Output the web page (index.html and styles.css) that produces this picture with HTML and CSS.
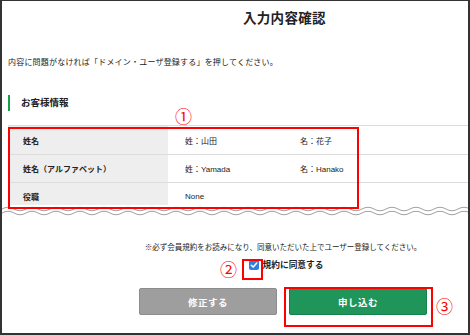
FILE: index.html
```html
<!DOCTYPE html>
<html lang="ja">
<head>
    <meta charset="UTF-8">
    <title>入力内容確認</title>
    <link rel="stylesheet" href="styles.css">
</head>
<body>
    <div class="frame">
        <h1 class="title">入力内容確認</h1>

        <p class="intro">内容に問題がなければ「ドメイン・ユーザ登録する」を押してください。</p>

        <h2 class="section">お客様情報</h2>

        <div class="table-wrap">
            <div class="row">
                <div class="label">姓名</div>
                <div class="value">姓：山田</div>
                <div class="value">名：花子</div>
            </div>
            <div class="row">
                <div class="label">姓名（アルファベット）</div>
                <div class="value">姓：Yamada</div>
                <div class="value">名：Hanako</div>
            </div>
            <div class="row">
                <div class="label">役職</div>
                <div class="value">None</div>
                <div class="value"></div>
            </div>
        </div>

        <svg class="wave" width="466" height="12" viewBox="0 0 466 12">
            <defs>
                <pattern id="wv" width="24" height="12" patternUnits="userSpaceOnUse">
                    <path d="M0 4 Q6 0.5 12 4 T24 4" stroke="#a0a0a0" stroke-width="1" fill="none"/>
                    <path d="M0 8 Q6 4.5 12 8 T24 8" stroke="#a0a0a0" stroke-width="1" fill="none"/>
                </pattern>
            </defs>
            <rect width="466" height="12" fill="#fff"/>
            <rect width="466" height="12" fill="url(#wv)"/>
        </svg>

        <div class="footer">
            <p class="note">※必ず会員規約をお読みになり、同意いただいた上でユーザー登録してください。</p>
            <div class="agree">
                <span class="check">
                    <svg width="10" height="10" viewBox="0 0 10 10"><path d="M2.3 5.2 L4.2 7 L7.8 3" stroke="#fff" stroke-width="1.5" fill="none" stroke-linecap="round" stroke-linejoin="round"/></svg>
                </span>
                <span class="agree-text">規約に同意する</span>
            </div>
            <div class="buttons">
                <button class="btn btn-back">修正する</button>
                <button class="btn btn-submit">申し込む</button>
            </div>
        </div>

        <!-- 注釈 -->
        <div class="mark mark-table"></div>
        <div class="mark mark-check"></div>
        <div class="mark mark-btn"></div>
        <span class="num num1">①</span>
        <span class="num num2">②</span>
        <span class="num num3">③</span>
    </div>
</body>
</html>
```

FILE: styles.css
```css
* {
    margin: 0;
    padding: 0;
    box-sizing: border-box;
}
body {
    font-family: "Liberation Sans", "Noto Sans CJK JP", sans-serif;
    color: #222;
    background: #fff;
}
.frame {
    position: relative;
    width: 470px;
    height: 335px;
    border: 2px solid #333;
    border-top-width: 1px;
    overflow: hidden;
}
.title {
    font-size: 13.5px;
    font-weight: bold;
    line-height: 20px;
    margin-top: 8px;
    padding-left: 241px;
    letter-spacing: 0.3px;
}
.intro {
    font-size: 8px;
    line-height: 12px;
    margin-top: 28px;
    padding-left: 6px;
    letter-spacing: 0.2px;
}
.section {
    font-size: 9.5px;
    font-weight: bold;
    line-height: 16px;
    margin: 26px 0 0 6px;
    padding-left: 11px;
    border-left: 2px solid #14a24a;
}
.table-wrap {
    margin: 14px 0 0 6px;
    height: 81px;
    overflow: hidden;
    border-top: 1px solid #ddd;
}
.row {
    display: grid;
    grid-template-columns: 160px 115px 1fr;
    height: 29px;
    border-bottom: 1px solid #ddd;
    font-size: 8px;
    align-items: center;
}
.row + .row {
    height: 28px;
}
.label {
    background: #eee;
    height: 100%;
    display: flex;
    align-items: center;
    padding-left: 15px;
    font-weight: bold;
}
.value {
    padding-left: 17px;
}
.wave {
    display: block;
    margin-top: -1px;
}
.footer {
    padding-left: 96px;
    text-align: center;
}
.note {
    font-size: 7.5px;
    line-height: 12px;
    margin-top: 25px;
}
.agree {
    display: flex;
    justify-content: center;
    align-items: center;
    margin-top: 5px;
    padding-left: 6px;
}
.check {
    width: 10px;
    height: 10px;
    background: #2e7fe0;
    border-radius: 2px;
    display: flex;
}
.agree-text {
    font-size: 8.7px;
    font-weight: bold;
    line-height: 12px;
    margin-left: 4px;
}
.buttons {
    display: flex;
    justify-content: center;
    gap: 12px;
    margin-top: 17px;
}
.btn {
    width: 138px;
    height: 27px;
    border-radius: 2px;
    color: #fff;
    font-size: 9.5px;
    font-weight: bold;
    font-family: "Liberation Sans", "Noto Sans CJK JP", sans-serif;
    letter-spacing: 0.5px;
}
.btn-back {
    background: #9e9e9e;
    border: 1px solid #8c8c8c;
}
.btn-submit {
    background: #1f955a;
    border: 1px solid #16804b;
}
.mark {
    position: absolute;
    border: 2px solid #f00;
}
.mark-table {
    left: 6px;
    top: 126px;
    width: 351px;
    height: 82px;
}
.mark-check {
    left: 240px;
    top: 258px;
    width: 21px;
    height: 21px;
}
.mark-btn {
    left: 282px;
    top: 286px;
    width: 149px;
    height: 40px;
}
.num {
    position: absolute;
    color: #f00;
    font-family: "Noto Sans CJK JP", sans-serif;
    font-size: 17px;
    line-height: 17px;
}
.num1 {
    left: 173px;
    top: 106px;
}
.num2 {
    left: 218px;
    top: 259px;
}
.num3 {
    left: 434px;
    top: 296px;
}
```
